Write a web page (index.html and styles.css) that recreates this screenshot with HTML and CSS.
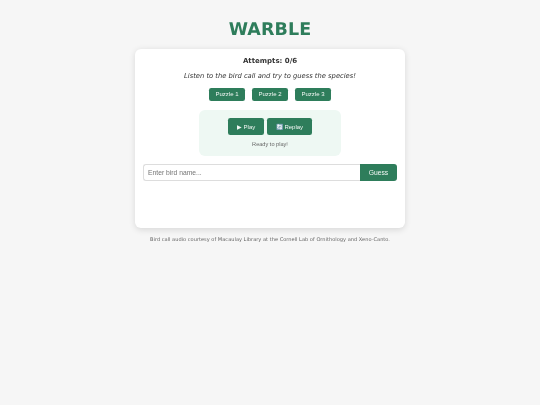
FILE: index.html
```html
<!DOCTYPE html>
<html lang="en">
<head>
<meta charset="utf-8">
<title>Warble</title>
<link rel="stylesheet" href="styles.css">
</head>
<body>
<main class="page">
  <h1 class="title">WARBLE</h1>
  <section class="card">
    <p class="attempts">Attempts: 0/6</p>
    <p class="intro">Listen to the bird call and try to guess the species!</p>
    <div class="puzzles">
      <button class="btn">Puzzle 1</button>
      <button class="btn">Puzzle 2</button>
      <button class="btn">Puzzle 3</button>
    </div>
    <div class="player">
      <div class="controls">
        <button class="btn btn-big">▶ Play</button>
        <button class="btn btn-big">🔄 Replay</button>
      </div>
      <p class="status">Ready to play!</p>
    </div>
    <form class="guess">
      <input class="guess-input" type="text" placeholder="Enter bird name...">
      <button class="btn guess-btn" type="button">Guess</button>
    </form>
  </section>
  <p class="credit">Bird call audio courtesy of Macaulay Library at the Cornell Lab of Ornithology and Xeno-Canto.</p>
</main>
</body>
</html>
```
FILE: styles.css
```css
* { box-sizing: border-box; }
html, body { margin: 0; padding: 0; }
html { text-rendering: geometricPrecision; }
body {
  background: #f6f6f6;
  color: #333;
  font-family: "DejaVu Sans", Verdana, sans-serif;
  min-height: 405px;
}
.page {
  width: 270px;
  margin: 0 auto;
  padding-top: 19px;
  display: flex;
  flex-direction: column;
  filter: blur(0.3px);
}
.title {
  margin: 0 0 7px;
  height: 23px;
  line-height: 23px;
  text-align: center;
  font-size: 17.5px;
  font-weight: 700;
  letter-spacing: 0.1px;
  color: #2e7d5b;
}
.card {
  height: 179px;
  background: #fff;
  border-radius: 6px;
  box-shadow: 0 1.5px 6px rgba(0, 0, 0, 0.12);
  padding: 7px 6px 6px;
  display: flex;
  flex-direction: column;
  align-items: center;
}
.attempts {
  margin: 0;
  font-size: 7px;
  line-height: 11px;
  font-weight: 700;
  color: #333;
}
.intro {
  margin: 3px 0 0;
  font-size: 6.75px;
  line-height: 12px;
  font-style: italic;
  color: #333;
}
.puzzles {
  margin-top: 5.5px;
  display: flex;
  gap: 6.5px;
}
.btn {
  height: 13.5px;
  padding: 0 6.75px;
  border: 0;
  border-radius: 2.25px;
  background: #2e7d5b;
  color: #f2f7f4;
  font-family: "Liberation Sans", Arial, sans-serif;
  font-size: 6px;
}
.player {
  width: 142px;
  height: 46px;
  margin-top: 8.5px;
  padding-top: 8px;
  background: #eef8f3;
  border-radius: 6px;
  display: flex;
  flex-direction: column;
  align-items: center;
}
.controls {
  display: flex;
  gap: 3.5px;
}
.btn-big {
  height: 17px;
  padding: 0 8.5px;
}
.status {
  margin: 5px 0 0;
  font-family: "Liberation Sans", Arial, sans-serif;
  font-size: 5.6px;
  line-height: 10px;
  color: #666;
}
.guess {
  align-self: stretch;
  margin: 8px 2px 0;
  display: flex;
}
.guess-input {
  flex: 1;
  min-width: 0;
  height: 17.5px;
  padding: 0 4px;
  border: 1px solid #ddd;
  border-right: 0;
  border-radius: 3px 0 0 3px;
  font-family: "Liberation Sans", Arial, sans-serif;
  font-size: 6.75px;
  outline: none;
}
.guess-input::placeholder { color: #757575; }
.guess-btn {
  width: 37px;
  height: 17.5px;
  padding: 0;
  border-radius: 0 3px 3px 0;
  font-size: 6.75px;
}
.credit {
  margin: 9px 0 0;
  text-align: center;
  font-size: 5.08px;
  line-height: 7px;
  color: #666;
}
```
